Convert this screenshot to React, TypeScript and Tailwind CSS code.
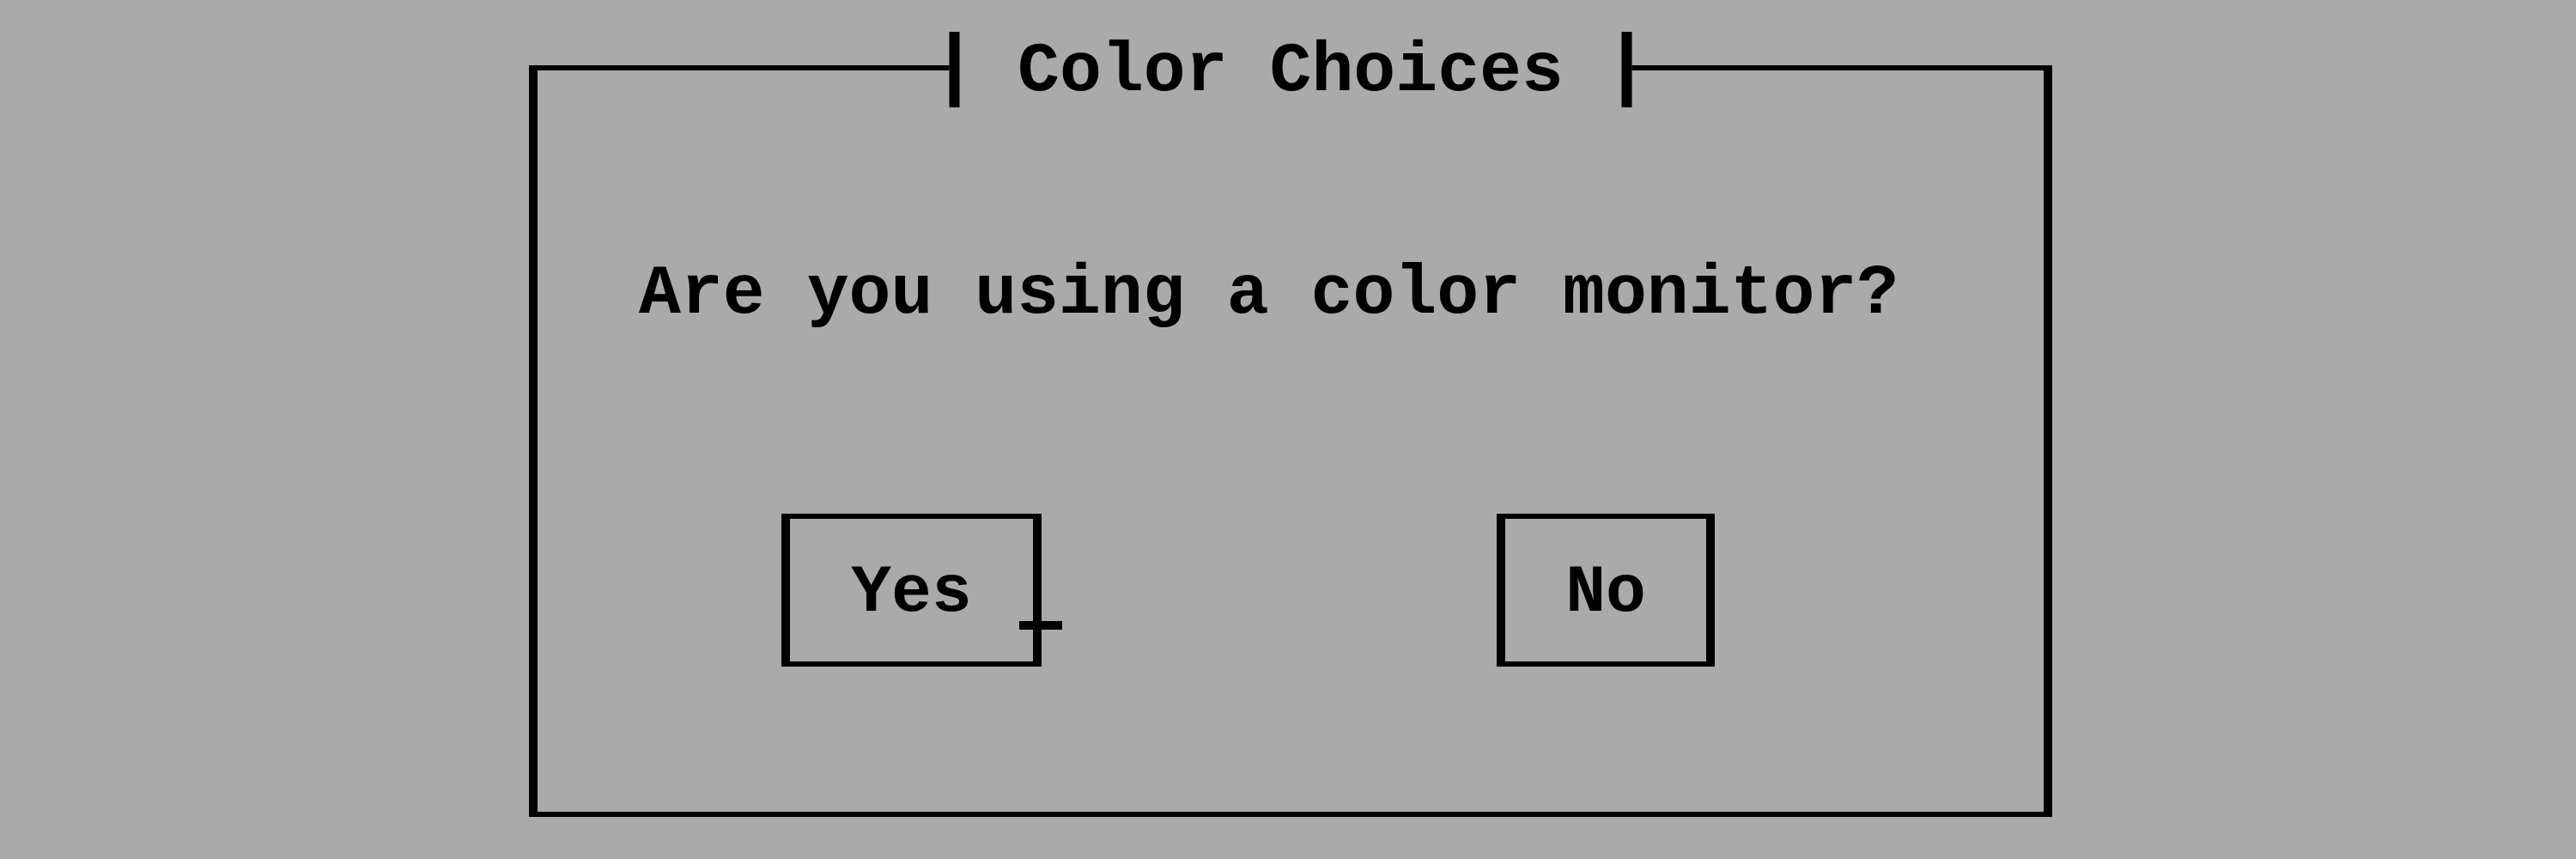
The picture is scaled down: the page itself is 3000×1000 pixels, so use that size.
export default function App() {
  const font = { fontFamily: '"Liberation Mono", "DejaVu Sans Mono", monospace' };

  return (
    <div className="h-[1000px] w-[3000px] overflow-hidden bg-[#aaaaaa] pl-[616px] pt-[76px] text-black" style={font}>
      <div className="relative h-[875px] w-[1774px] border-x-[10px] border-y-[6px] border-black">
        {/* title sits over the top border, like a legend */}
        <div className="absolute left-1/2 top-[-45px] flex h-[88px] w-[795px] -translate-x-1/2 items-stretch bg-[#aaaaaa]">
          <div className="w-[12px] bg-black" />
          <div className="flex flex-1 items-center justify-center pt-[4px] text-[81.5px] font-bold leading-[82px]">
            Color Choices
          </div>
          <div className="w-[12px] bg-black" />
        </div>

        <div className="pl-[118px] pt-[219px] text-[81.5px] font-bold leading-[82px] whitespace-pre">
          Are you using a color monitor?
        </div>

        <div className="mt-[215px] flex pl-[284px]">
          <div className="relative flex h-[178px] w-[303px] items-center justify-center border-x-[10px] border-y-[6px] border-black pt-[6px] text-[78px] font-bold leading-[82px]">
            Yes
            {/* mouse cursor resting on the button edge */}
            <div className="absolute left-[267px] top-[119px] h-[10px] w-[50px] bg-black" />
          </div>
          <div className="ml-[530px] flex h-[178px] w-[254px] items-center justify-center border-x-[10px] border-y-[6px] border-black pt-[6px] text-[78px] font-bold leading-[82px]">
            No
          </div>
        </div>
      </div>
    </div>
  );
}
